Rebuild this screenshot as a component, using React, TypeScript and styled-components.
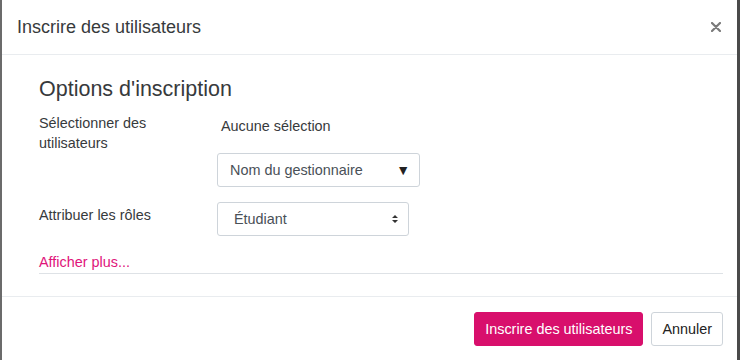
import * as React from 'react';
import styled, { createGlobalStyle } from 'styled-components';

const GlobalStyle = createGlobalStyle`
  html, body {
    margin: 0;
    padding: 0;
    background: #ffffff;
  }
  body {
    font-family: "Liberation Sans", Arial, sans-serif;
    color: #373a3c;
  }
`;

const Modal = styled.div`
  width: 740px;
  height: 360px;
  box-sizing: border-box;
  display: flex;
  flex-direction: column;
  background: #fff;
  border-left: 2px solid #6b6b6b;
  border-right: 3px solid #4a4a4a;
`;

const Header = styled.div`
  height: 55px;
  box-sizing: border-box;
  display: flex;
  align-items: center;
  justify-content: space-between;
  padding: 0 15px 0 15px;
  border-bottom: 1px solid #e9ecef;
`;

const ModalTitle = styled.h5`
  margin: 0;
  font-size: 18px;
  font-weight: 400;
  color: #373a3c;
`;

const Close = styled.button`
  border: 0;
  background: none;
  padding: 0;
  width: 12px;
  height: 12px;
  display: flex;
  align-items: center;
  justify-content: center;
  cursor: pointer;
`;

const Body = styled.div`
  flex: 1;
  padding: 22px 14px 0 37px;
`;

const Legend = styled.h3`
  margin: 0 0 12px;
  font-size: 21.5px;
  font-weight: 400;
  line-height: 24px;
  color: #373a3c;
`;

const Row = styled.div`
  display: grid;
  grid-template-columns: 178px 1fr;
  margin-bottom: 15px;
`;

const Label = styled.div<{ $pad?: number }>`
  font-size: 14.4px;
  line-height: 20px;
  padding-top: ${p => p.$pad ?? 0}px;
`;

const Field = styled.div`
  display: flex;
  flex-direction: column;
  align-items: flex-start;
`;

const NoSelection = styled.div`
  font-size: 14.4px;
  line-height: 20px;
  padding: 3px 0 0 4px;
  margin-bottom: 17px;
`;

const Select = styled.div<{ $width: number; $indent: number }>`
  width: ${p => p.$width}px;
  height: 34px;
  box-sizing: border-box;
  border: 1px solid #ced4da;
  border-radius: 3px;
  display: flex;
  align-items: center;
  justify-content: space-between;
  padding: 0 9px 0 ${p => p.$indent}px;
  font-size: 14.4px;
  color: #495057;
`;

const Triangle = styled.span`
  font-size: 14px;
  color: #222;
`;

const ShowMore = styled.a`
  display: block;
  font-size: 14.4px;
  line-height: 20px;
  color: #e0157a;
  text-decoration: none;
  padding: 1px 0 1px;
  border-bottom: 1px solid #dee2e6;
`;

const Footer = styled.div`
  height: 64px;
  box-sizing: border-box;
  border-top: 1px solid #e9ecef;
  display: flex;
  justify-content: flex-end;
  align-items: flex-start;
  gap: 8px;
  padding: 15px 14px 0 0;
`;

const Button = styled.button<{ $primary?: boolean }>`
  height: 34px;
  box-sizing: border-box;
  border-radius: 3px;
  padding: 0 10px;
  font-family: inherit;
  font-size: 14.4px;
  cursor: pointer;
  border: 1px solid ${p => (p.$primary ? '#d80f6c' : '#ced4da')};
  background: ${p => (p.$primary ? '#d80f6c' : '#fff')};
  color: ${p => (p.$primary ? '#fff' : '#222')};
`;

export default function App() {
  return (
    <>
      <GlobalStyle />
      <Modal>
        <Header>
          <ModalTitle>Inscrire des utilisateurs</ModalTitle>
          <Close aria-label="Fermer">
            <svg width="10" height="10" viewBox="0 0 10 10">
              <path d="M1 1L9 9M9 1L1 9" stroke="#7a7a7a" strokeWidth="2.2" strokeLinecap="round" />
            </svg>
          </Close>
        </Header>
        <Body>
          <Legend>Options d'inscription</Legend>
          <Row>
            <Label>
              Sélectionner des
              <br />
              utilisateurs
            </Label>
            <Field>
              <NoSelection>Aucune sélection</NoSelection>
              <Select $width={203} $indent={12}>
                <span>Nom du gestionnaire</span>
                <Triangle>▼</Triangle>
              </Select>
            </Field>
          </Row>
          <Row>
            <Label $pad={3}>Attribuer les rôles</Label>
            <Field>
              <Select $width={192} $indent={16}>
                <span>Étudiant</span>
                <svg width="8" height="12" viewBox="0 0 8 12">
                  <path d="M1 5L4 2L7 5Z M1 7L4 10L7 7Z" fill="#333" />
                </svg>
              </Select>
            </Field>
          </Row>
          <ShowMore href="#">Afficher plus...</ShowMore>
        </Body>
        <Footer>
          <Button $primary>Inscrire des utilisateurs</Button>
          <Button>Annuler</Button>
        </Footer>
      </Modal>
    </>
  );
}
